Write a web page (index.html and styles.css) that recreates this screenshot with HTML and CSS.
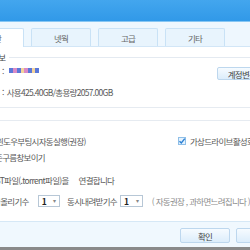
FILE: index.html
```html
<!DOCTYPE html>
<html lang="ko">
<head>
  <meta charset="UTF-8">
  <title>설정</title>
  <link rel="stylesheet" href="styles.css">
</head>
<body>
  <div class="titlebar"></div>
  <div class="tabs">
    <div class="tab active">일반</div>
    <div class="tab">넷웍</div>
    <div class="tab">고급</div>
    <div class="tab">기타</div>
  </div>
  <div class="content">
    <div class="legend"><span>계정정보</span></div>
    <div class="row account">
      <span class="colon">:</span>
      <span class="masked">
        <i class="b"></i><i class="p"></i><i class="b"></i><i class="y"></i><i class="p"></i><i class="b"></i><i class="y"></i><i class="b"></i>
      </span>
      <button class="btn btn-account">계정변경</button>
    </div>
    <div class="row usage"><span class="colon">:</span> 사용425.40GB/총용량2057.00GB</div>
    <div class="rule"></div>
    <div class="rule rule-2"></div>
    <div class="opts">
      <span class="clip clip-boot">윈도우부팅시자동실행(권장)</span>
      <label class="check">
        <span class="box">
          <svg width="8" height="8" viewBox="0 0 8 8"><path d="M1.5 4.2 L3.3 6 L6.8 1.6" fill="none" stroke="#2a7fd4" stroke-width="1.4"/></svg>
        </span>
        가상드라이브활성화
      </label>
    </div>
    <div class="row cloud"><span class="clip clip-cloud">표준구름창보이기</span></div>
    <div class="row torrent">
      <span class="clip clip-bt">BT파일(.torrent파일)을</span>
      <span class="gap">연결합니다</span>
    </div>
    <div class="row counts">
      <span class="clip clip-up">동시올리기수</span>
      <span class="select sel-up"><b>1</b><em>▾</em></span>
      <span>동시내려받기수</span>
      <span class="select sel-down"><b>1</b><em>▾</em></span>
      <span class="hint">( 자동권장 , 과하면느려집니다 )</span>
    </div>
  </div>
  <div class="footer">
    <button class="btn">확인</button>
    <button class="btn">취소</button>
  </div>
  <div class="frame-bottom"></div>
</body>
</html>
```

FILE: styles.css
```css
body {
  margin: 0;
  width: 250px;
  height: 250px;
  overflow: hidden;
  display: flex;
  flex-direction: column;
  font-family: "Noto Sans CJK KR", "Noto Sans", sans-serif;
  font-size: 8.5px;
  letter-spacing: -0.7px;
  color: #585858;
  background: #fff;
}
.titlebar {
  height: 21px;
  flex-shrink: 0;
  background: linear-gradient(#43a6ee, #3199e8);
  border-bottom: 1px solid #86c6f3;
}
.tabs {
  height: 18px;
  flex-shrink: 0;
  padding-top: 6px;
  display: flex;
  align-items: flex-end;
  gap: 7px;
  background: #eef7fe;
  border-bottom: 1px solid #d2e6f7;
}
.tab {
  width: 58px;
  height: 17px;
  flex-shrink: 0;
  display: flex;
  align-items: center;
  justify-content: center;
  background: #e8f4fd;
  border: 1px solid #c9e2f6;
  border-bottom: none;
  border-radius: 2px 2px 0 0;
  color: #666;
}
.tab:first-child {
  margin-left: -36px;
}
.tab.active {
  height: 18px;
  margin-bottom: -1px;
  background: #fff;
}
.content {
  flex: 1;
  display: flex;
  flex-direction: column;
  overflow: hidden;
}
.legend {
  margin-top: 5px;
  height: 10px;
  line-height: 10px;
  display: flex;
  align-items: center;
  color: #444;
}
.legend span {
  margin-left: -23px;
}
.legend::after {
  content: "";
  flex: 1;
  margin-left: 4px;
  border-top: 1px solid #e4eaf1;
}
.row {
  display: flex;
  line-height: 10px;
  white-space: nowrap;
}
.colon {
  padding-left: 2px;
  margin-right: 3px;
}
.account {
  margin-top: 5px;
  height: 13px;
  align-items: flex-start;
}
.account .colon {
  line-height: 8px;
}
.masked {
  display: flex;
  margin-top: 1px;
  margin-left: 2px;
}
.masked i {
  width: 4px;
  height: 5px;
}
.masked .b { background: #5b78d8; }
.masked .p { background: #d98ac6; }
.masked .y { background: #f4d39a; width: 3px; }
.btn {
  font: inherit;
  letter-spacing: inherit;
  color: #444;
  background: linear-gradient(#f6fbff, #dcedfb);
  border: 1px solid #bdd7ee;
  border-radius: 2px;
  padding: 0;
  flex-shrink: 0;
}
.btn-account {
  width: 50px;
  height: 13px;
  margin-left: auto;
  margin-right: -17px;
}
.usage {
  margin-top: 7px;
}
.rule {
  margin-top: 10px;
  border-top: 1px solid #e6ebf1;
}
.rule-2 {
  margin-top: 12px;
}
.opts {
  margin-top: 15px;
  display: grid;
  grid-template-columns: 178px auto;
  line-height: 10px;
  white-space: nowrap;
}
.clip-boot { margin-left: -4px; }
.check {
  display: flex;
  align-items: center;
  gap: 4px;
}
.box {
  width: 8px;
  height: 8px;
  box-sizing: border-box;
  display: flex;
  border: 1px solid #8fbfe8;
  background: #e4f2fd;
}
.box svg {
  margin: -1px;
}
.cloud {
  margin-top: 6px;
}
.clip-cloud { margin-left: -12px; }
.torrent {
  margin-top: 13px;
}
.clip-bt { margin-left: -5px; }
.gap { margin-left: 10px; }
.counts {
  margin-top: 10px;
  height: 12px;
  align-items: center;
}
.clip-up { margin-left: -14px; }
.select {
  width: 30px;
  height: 12px;
  box-sizing: border-box;
  display: flex;
  align-items: center;
  justify-content: space-between;
  padding: 0 4px 0 3px;
  border: 1px solid #b7c7d6;
  background: #fff;
}
.sel-up { margin: 0 7px 0 9px; }
.sel-down { width: 31px; margin: 0 9px 0 3px; }
.select b {
  color: #222;
  font-weight: bold;
}
.select em {
  font-style: normal;
  font-size: 6px;
  color: #888;
}
.hint {
  color: #8a8a8a;
}
.footer {
  height: 26px;
  flex-shrink: 0;
  box-sizing: border-box;
  padding: 6px 0 0 180px;
  display: flex;
  align-items: flex-start;
  gap: 6px;
  background: #f0f8fe;
  border-top: 1px solid #d6e8f6;
}
.footer .btn {
  width: 50px;
  height: 15px;
}
.frame-bottom {
  height: 3px;
  flex-shrink: 0;
  background: #8a8a8a;
}
```
